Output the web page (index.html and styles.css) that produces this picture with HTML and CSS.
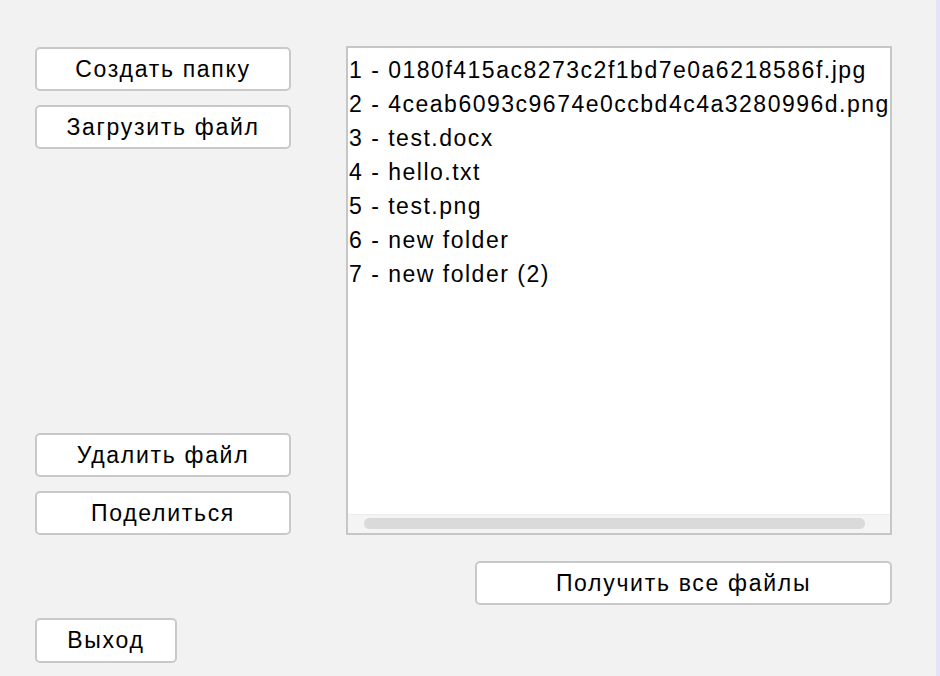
FILE: index.html
```html
<!DOCTYPE html>
<html lang="ru">
<head>
<meta charset="utf-8">
<title>Файлы</title>
<link rel="stylesheet" href="styles.css">
</head>
<body>
<div class="app">
  <div class="main-row">
    <div class="side">
      <div class="group">
        <button class="btn">Создать папку</button>
        <button class="btn">Загрузить файл</button>
      </div>
      <div class="group">
        <button class="btn">Удалить файл</button>
        <button class="btn">Поделиться</button>
      </div>
    </div>
    <div class="list">
      <div class="items">
        <div class="item">1 - 0180f415ac8273c2f1bd7e0a6218586f.jpg</div>
        <div class="item">2 - 4ceab6093c9674e0ccbd4c4a3280996d.png</div>
        <div class="item">3 - test.docx</div>
        <div class="item">4 - hello.txt</div>
        <div class="item">5 - test.png</div>
        <div class="item">6 - new folder</div>
        <div class="item">7 - new folder (2)</div>
      </div>
      <div class="hscroll"><div class="thumb"></div></div>
    </div>
  </div>
  <div class="fetch-row">
    <button class="btn btn-fetch">Получить все файлы</button>
  </div>
  <div class="exit-row">
    <button class="btn btn-exit">Выход</button>
  </div>
</div>
</body>
</html>
```
FILE: styles.css
```css
html, body {
  margin: 0;
  padding: 0;
}
body {
  background: #e4e4f7;
  width: 940px;
  height: 676px;
  overflow: hidden;
  font-family: "Liberation Sans", Arial, sans-serif;
  color: #000;
}
.app {
  width: 936px;
  height: 676px;
  background: #f2f2f2;
  box-sizing: border-box;
  padding: 46px 0 0 35px;
}
.main-row {
  display: flex;
  gap: 55px;
  height: 489px;
}
.side {
  width: 256px;
  display: flex;
  flex-direction: column;
  justify-content: space-between;
  padding-top: 1px;
}
.group {
  display: flex;
  flex-direction: column;
  gap: 14px;
}
.btn {
  display: block;
  box-sizing: border-box;
  width: 256px;
  height: 44px;
  background: #fff;
  border: 2px solid #c9c9c9;
  border-radius: 5px;
  font-family: "Liberation Sans", Arial, sans-serif;
  font-size: 23px;
  letter-spacing: 1.7px;
  color: #000;
  padding: 0;
  margin: 0;
  text-align: center;
}
.list {
  width: 546px;
  box-sizing: border-box;
  height: 489px;
  background: #fff;
  border: 2px solid #c6c6c6;
  display: flex;
  flex-direction: column;
}
.items {
  flex: 1;
  overflow: hidden;
  padding: 5px 0 0 1px;
  font-size: 23px;
  letter-spacing: 1.5px;
  line-height: 34px;
}
.item {
  white-space: nowrap;
}
.hscroll {
  height: 19px;
  background: #f4f4f4;
  border-top: 1px solid #ececec;
  box-sizing: border-box;
  padding: 3px 0 0 16px;
}
.thumb {
  width: 501px;
  height: 11px;
  border-radius: 6px;
  background: #dadada;
}
.fetch-row {
  display: flex;
  width: 857px;
  justify-content: flex-end;
  margin-top: 26px;
}
.btn-fetch {
  width: 417px;
}
.exit-row {
  margin-top: 13px;
}
.btn-exit {
  width: 142px;
  height: 45px;
}
```
